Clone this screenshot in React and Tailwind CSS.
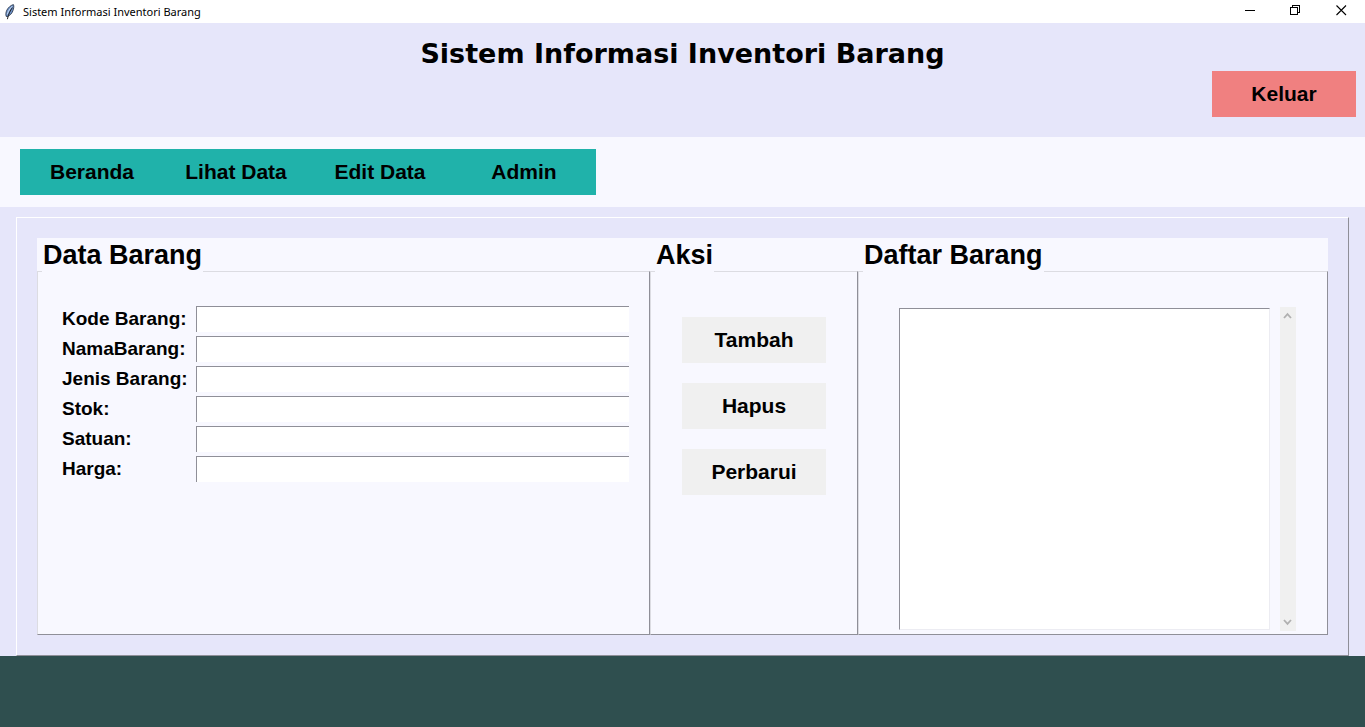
import React from "react";

const menu = ["Beranda", "Lihat Data", "Edit Data", "Admin"];

const fields = [
  { id: "kode", label: "Kode Barang:" },
  { id: "nama", label: "NamaBarang:" },
  { id: "jenis", label: "Jenis Barang:" },
  { id: "stok", label: "Stok:" },
  { id: "satuan", label: "Satuan:" },
  { id: "harga", label: "Harga:" },
];

const actions = ["Tambah", "Hapus", "Perbarui"];

function FeatherIcon() {
  return (
    <svg width="12" height="16" viewBox="0 0 12 16" aria-hidden="true">
      <path d="M9.4 0.6C7 1.2 4.2 3.4 2.8 6.2C1.8 8.4 1.6 10.6 2.2 12.4L3.4 12.6C5.8 11.6 7.9 9.6 8.9 6.8C9.7 4.6 10.2 2 9.4 0.6Z" fill="#6f93c8" stroke="#1d2a3d" strokeWidth="0.8" />
      <path d="M8.2 2.2C6 4.4 4 7.4 3.2 10.4" fill="none" stroke="#c4d6f0" strokeWidth="1" />
      <path d="M8.4 3.6C6.4 6.4 4.2 10.4 3.4 15.2" fill="none" stroke="#101010" strokeWidth="0.9" />
    </svg>
  );
}

function TitleBar() {
  return (
    <div className="flex h-[23px] items-start bg-white pl-1">
      <div className="flex h-[23px] flex-1 items-center">
        <FeatherIcon />
        <span className="pl-[7px] font-['Noto_Sans','Open_Sans',sans-serif] text-[11px] leading-4">
          Sistem Informasi Inventori Barang
        </span>
      </div>
      <button type="button" aria-label="Minimize" className="flex h-[21px] w-[46px] items-center justify-center">
        <svg width="11" height="11" viewBox="0 0 11 11" shapeRendering="crispEdges">
          <path d="M0 5.5H10" stroke="#000" />
        </svg>
      </button>
      <button type="button" aria-label="Restore" className="flex h-[21px] w-[45px] items-center justify-center">
        <svg width="11" height="11" viewBox="0 0 11 11" fill="none" shapeRendering="crispEdges">
          <path d="M0.5 2.5H7.5V9.5H0.5ZM2.5 2.5V0.5H9.5V7.5H7.5" stroke="#000" />
        </svg>
      </button>
      <button type="button" aria-label="Close" className="flex h-[21px] w-[47px] items-center justify-center">
        <svg width="11" height="11" viewBox="0 0 11 11">
          <path d="M0.5 0.5L10 10M10 0.5L0.5 10" stroke="#000" strokeWidth="1.1" />
        </svg>
      </button>
    </div>
  );
}

function Panel({ title, children }) {
  return (
    <section className="flex flex-col">
      <h2 className="relative -mb-px ml-[5px] self-start bg-[#f8f8ff] px-px text-[27px] leading-[34px] font-bold">
        {title}
      </h2>
      <div className="flex-1 border border-t-[#dcdce2] border-r-[#8f8f98] border-b-[#8f8f98] border-l-[#dcdce2]">
        {children}
      </div>
    </section>
  );
}

export default function App() {
  return (
    <div className="flex min-h-screen flex-col bg-[#2f4f4f] font-['Liberation_Sans',Arial,sans-serif] text-black">
      <TitleBar />

      <header className="flex flex-col bg-[#e6e6fa] pt-[14px] pb-5">
        <h1 className="text-center font-['DejaVu_Sans',Verdana,sans-serif] text-[27px] leading-[34px] font-bold">
          Sistem Informasi Inventori Barang
        </h1>
        <button type="button" className="mr-[9px] h-[46px] w-36 self-end bg-[#f08080] text-[21px] font-bold">
          Keluar
        </button>
      </header>

      <nav className="flex bg-[#f8f8ff] px-5 py-3">
        {menu.map((item) => (
          <button key={item} type="button" className="h-[46px] w-36 bg-[#20b2aa] text-[21px] font-bold">
            {item}
          </button>
        ))}
      </nav>

      <main className="bg-[#e6e6fa] px-4 pt-[10px]">
        <div className="border border-t-white border-r-[#8f8f98] border-b-[#8f8f98] border-l-white p-5">
          <div className="grid grid-cols-[613fr_208fr_470fr] bg-[#f8f8ff]">
            <Panel title="Data Barang">
              <form className="flex flex-col gap-1 pt-[34px] pr-5 pl-6">
                {fields.map((f) => (
                  <div key={f.id} className="flex items-center">
                    <label htmlFor={f.id} className="w-[134px] text-[19px] leading-[26px] font-bold whitespace-nowrap">
                      {f.label}
                    </label>
                    <input
                      id={f.id}
                      type="text"
                      className="h-[26px] min-w-0 flex-1 border-t border-l border-[#8f8f98] bg-white px-1 text-[19px] outline-none"
                    />
                  </div>
                ))}
              </form>
            </Panel>

            <Panel title="Aksi">
              <div className="flex flex-col items-center gap-5 pt-[45px]">
                {actions.map((a) => (
                  <button key={a} type="button" className="h-[46px] w-36 bg-[#f0f0f0] text-[21px] font-bold">
                    {a}
                  </button>
                ))}
              </div>
            </Panel>

            <Panel title="Daftar Barang">
              <div className="flex gap-[10px] pt-[35px] pr-[31px] pb-[3px] pl-10">
                <div
                  role="listbox"
                  aria-label="Daftar Barang"
                  tabIndex={0}
                  className="my-px flex-1 border border-t-[#8f8f98] border-r-[#ececf2] border-b-[#ececf2] border-l-[#8f8f98] bg-white outline-none"
                />
                <div className="flex h-[324px] w-4 flex-col justify-between bg-[#f0f0f0]">
                  <button type="button" aria-label="Gulir ke atas" className="flex h-[18px] items-center justify-center">
                    <svg width="10" height="8" viewBox="0 0 10 8" fill="none">
                      <path d="M1 6L4.5 2.2L8 6" stroke="#b0b0b0" strokeWidth="1.8" />
                    </svg>
                  </button>
                  <button type="button" aria-label="Gulir ke bawah" className="flex h-[18px] items-center justify-center">
                    <svg width="10" height="8" viewBox="0 0 10 8" fill="none">
                      <path d="M1 2L4.5 5.8L8 2" stroke="#b0b0b0" strokeWidth="1.8" />
                    </svg>
                  </button>
                </div>
              </div>
            </Panel>
          </div>
        </div>
      </main>
    </div>
  );
}
